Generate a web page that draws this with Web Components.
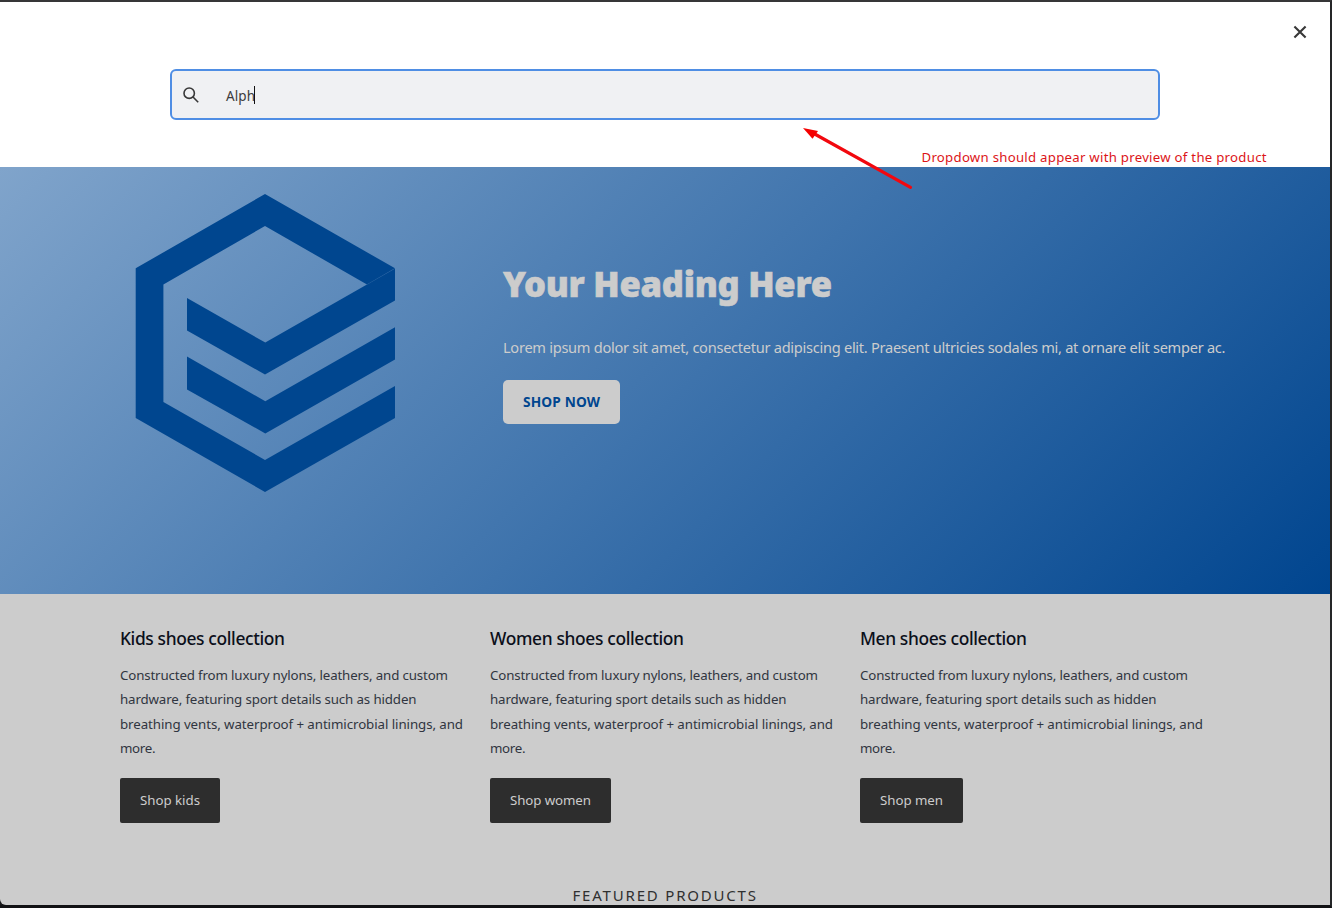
<!DOCTYPE html>
<html lang="en">
<head>
<meta charset="utf-8">
<title>Shop</title>
<style>
html,body{margin:0;height:100%}
body{background:#18191b;font-family:"Noto Sans","Open Sans",sans-serif;overflow:hidden}
</style>
</head>
<body>
<shop-window>
  <search-panel slot="search" value="Alph"></search-panel>
  <hero-banner heading="Your Heading Here" action="SHOP NOW">Lorem ipsum dolor sit amet, consectetur adipiscing elit. Praesent ultricies sodales mi, at ornare elit semper ac.</hero-banner>
  <collection-list>
    <collection-card heading="Kids shoes collection" heading-width="165" action="Shop kids" action-width="60"></collection-card>
    <collection-card heading="Women shoes collection" heading-width="194" action="Shop women" action-width="81"></collection-card>
    <collection-card heading="Men shoes collection" heading-width="167" action="Shop men" action-width="63"></collection-card>
  </collection-list>
  <section-title>FEATURED PRODUCTS</section-title>
  <review-note slot="note">Dropdown should appear with preview of the product</review-note>
</shop-window>
<script>
/* One line of text tracked so that it fills the given width. */
class FitLine extends HTMLElement{
  connectedCallback(){
    if(!this.shadowRoot){
      this.attachShadow({mode:'open'}).innerHTML=`<style>:host{display:block;white-space:nowrap}span{display:inline-block}</style><span><slot></slot></span>`;
    }
    const s=this.shadowRoot.querySelector('span');
    const w=parseFloat(this.getAttribute('width'));
    const n=this.textContent.trim().length;
    const nat=s.getBoundingClientRect().width;
    if(w&&nat) s.style.letterSpacing=((w-nat)/(n-1)).toFixed(3)+'px';
    this.style.width=w+'px';
  }
}

class ShopWindow extends HTMLElement{
  constructor(){super();this.attachShadow({mode:'open'}).innerHTML=`
<style>
:host{display:block;box-sizing:border-box;width:1332px;height:908px;border-style:solid;border-width:2px 2px 3px 0;border-color:#363638 #252628 #111214 #18191b;position:relative;overflow:hidden}
main{display:flex;flex-direction:column;height:903px;overflow:hidden;background:#ccc;border-bottom-left-radius:6px}
</style>
<main><slot name="search"></slot><slot></slot></main><slot name="note"></slot>`}
}

class SearchPanel extends HTMLElement{
  connectedCallback(){this.attachShadow({mode:'open'}).innerHTML=`
<style>
:host{display:flex;flex-direction:column;box-sizing:border-box;height:165px;flex:none;background:#fff;color:#3c3c3c}
.top{display:flex;justify-content:flex-end;padding:22px 22px 0 0;height:45px}
.field{display:flex;align-items:center;box-sizing:border-box;width:990px;height:51px;margin-left:170px;border:2px solid #4f8ee4;border-radius:6px;background:#f0f1f3;padding-left:11px;font-size:13.5px}
.icon{width:16px;height:16px;margin-right:27px}
fit-line{padding-top:2px}
.caret{width:1px;height:18px;background:#111;margin-left:-1px}
</style>
<div class="top"><svg width="16" height="16" viewBox="0 0 16 16"><path d="M2.4 2.4l11.2 11.2M13.6 2.4L2.4 13.6" stroke="#383838" stroke-width="2.1" fill="none"/></svg></div>
<div class="field"><svg class="icon" viewBox="0 0 16 16" fill="none" stroke="#383838" stroke-width="1.6"><circle cx="6.2" cy="6.2" r="5.2"/><path d="M10 10l5.2 5.2"/></svg><fit-line width="29">${this.getAttribute('value')}</fit-line><i class="caret"></i></div>`}
}

class BrandMark extends HTMLElement{
  constructor(){super();this.attachShadow({mode:'open'}).innerHTML=`
<style>:host{display:block;width:260px;height:299px}svg{display:block}</style>
<svg width="260" height="299" viewBox="135 193 260 299" fill="#00468f">
<path d="M265 194L395 268.3L367 284.5L265 226L163.4 284.5V402L265 460L395 386V418L265 492L135.7 418V268.3Z"/>
<path d="M187 298L265.3 342.6L395 268.6V300.5L265 374.5L187 330.4Z"/>
<path d="M187 356.6L265.3 401.3L395 327.3V359.5L265.3 433.4L187 389.4Z"/>
<path d="M367 284.5L395 268.4" stroke="#1d5c9d" stroke-width=".4"/>
</svg>`}
}

class HeroBanner extends HTMLElement{
  connectedCallback(){this.attachShadow({mode:'open'}).innerHTML=`
<style>
:host{display:flex;box-sizing:border-box;height:427px;flex:none;background:linear-gradient(135deg,#80a4cb 0%,#00458f 100%);padding:26px 0 0 135px;gap:108px;color:#ccc}
.copy{padding-top:64px}
h1{margin:0;font-weight:900;font-size:34.5px;line-height:54px;-webkit-text-stroke:.6px #ccc}
p{margin:24px 0 0;font-size:14.6px;line-height:24px}
a{display:flex;justify-content:center;align-items:center;box-sizing:border-box;width:117px;height:44px;margin-top:21px;padding-bottom:1px;background:#ccc;color:#00468f;border-radius:5px;font-size:13.7px;font-weight:700}
</style>
<brand-mark></brand-mark>
<div class="copy"><h1><fit-line width="329">${this.getAttribute('heading')}</fit-line></h1>
<p><fit-line width="722.5">${this.textContent.trim()}</fit-line></p>
<a><fit-line width="77">${this.getAttribute('action')}</fit-line></a></div>`}
}

class CollectionList extends HTMLElement{
  constructor(){super();this.attachShadow({mode:'open'}).innerHTML=`
<style>:host{display:grid;grid-template-columns:repeat(3,350px);column-gap:20px;padding:31px 0 0 120px;flex:none}</style><slot></slot>`}
}

class CollectionCard extends HTMLElement{
  connectedCallback(){
    const a=n=>this.getAttribute(n);
    this.attachShadow({mode:'open'}).innerHTML=`
<style>
:host{display:flex;flex-direction:column;align-items:flex-start}
h2{margin:0;font-size:17.4px;line-height:26px;font-weight:500;color:#0b0f1a}
.text{margin-top:12px;font-size:13.3px;line-height:24.4px;color:#303540}
a{display:flex;align-items:center;box-sizing:border-box;height:45px;margin-top:17.4px;padding:0 20px 2px;background:#2d2d2d;color:#ccc;border-radius:2px;font-size:13.3px}
</style>
<h2><fit-line width="${a('heading-width')}">${a('heading')}</fit-line></h2>
<div class="text">
<fit-line width="328">Constructed from luxury nylons, leathers, and custom</fit-line>
<fit-line width="296.5">hardware, featuring sport details such as hidden</fit-line>
<fit-line width="343">breathing vents, waterproof + antimicrobial linings, and</fit-line>
<fit-line width="35.5">more.</fit-line>
</div>
<a><fit-line width="${a('action-width')}">${a('action')}</fit-line></a>`}
}

class SectionTitle extends HTMLElement{
  connectedCallback(){this.attachShadow({mode:'open'}).innerHTML=`
<style>:host{display:flex;flex:none;padding:60px 0 0 572.5px;font-size:15px;line-height:24px;color:#303030}</style>
<fit-line width="183.5">${this.textContent.trim()}</fit-line>`}
}

/* Red callout drawn over the page. */
class ReviewNote extends HTMLElement{
  connectedCallback(){this.attachShadow({mode:'open'}).innerHTML=`
<style>
:host{position:absolute;left:802px;top:124px;width:470px;height:66px;color:#dc1418;font-size:13.2px;line-height:20px}
svg{position:absolute;left:0;top:0}
fit-line{position:absolute;left:119.5px;top:21px}
</style>
<svg width="112" height="66" viewBox="802 126 112 66"><path d="M812 132.5L910.5 187.3" stroke="#f2080e" stroke-width="3.2" stroke-linecap="round"/><path d="M803 128L818 131L812.5 138.8Z" fill="#f40000"/></svg>
<fit-line width="345">${this.textContent.trim()}</fit-line>`}
}

customElements.define('fit-line',FitLine);
customElements.define('brand-mark',BrandMark);
customElements.define('shop-window',ShopWindow);
customElements.define('search-panel',SearchPanel);
customElements.define('hero-banner',HeroBanner);
customElements.define('collection-list',CollectionList);
customElements.define('collection-card',CollectionCard);
customElements.define('section-title',SectionTitle);
customElements.define('review-note',ReviewNote);
</script>
</body>
</html>
